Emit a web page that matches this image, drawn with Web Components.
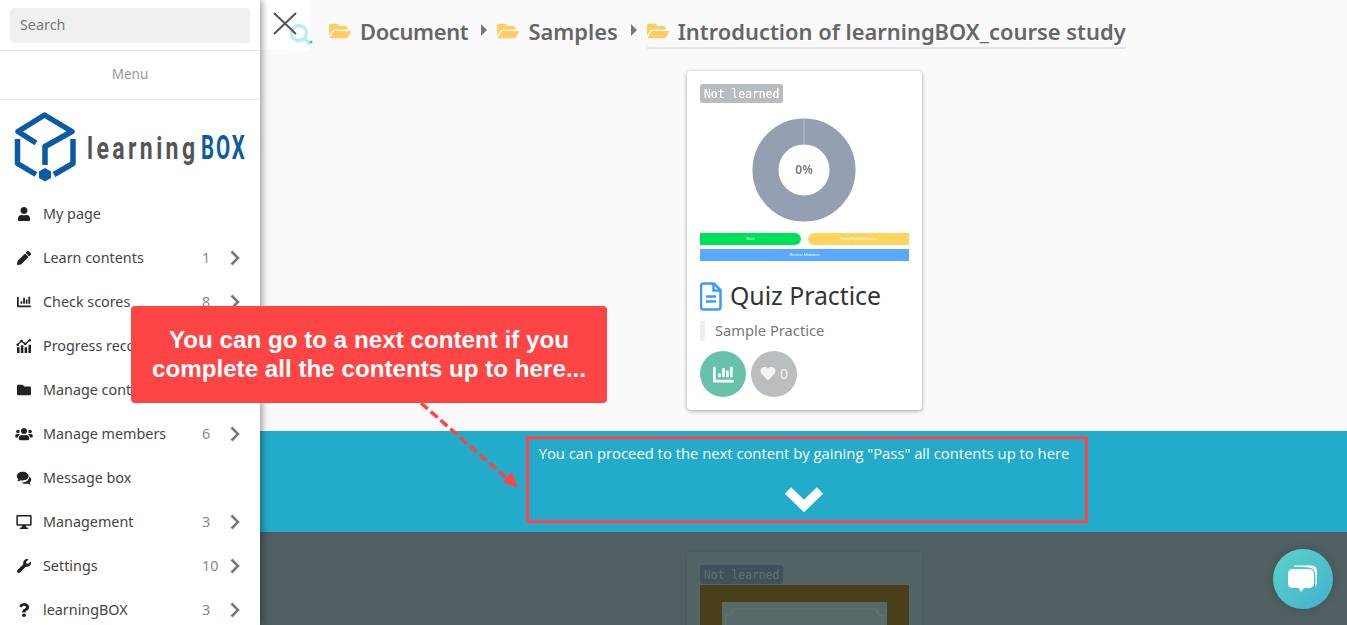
<!DOCTYPE html>
<html lang="en">
<head>
<meta charset="utf-8">
<title>learningBOX</title>
<style>
  html, body { margin: 0; padding: 0; height: 100%; overflow: hidden; }
  body { font-family: "Noto Sans", "Open Sans", sans-serif; }
</style>
</head>
<body>
<lb-page>
  <lb-sidebar slot="side">
    <lb-menu-item icon="user">My page</lb-menu-item>
    <lb-menu-item icon="pencil" count="1">Learn contents</lb-menu-item>
    <lb-menu-item icon="chart" count="8">Check scores</lb-menu-item>
    <lb-menu-item icon="progress">Progress records</lb-menu-item>
    <lb-menu-item icon="folder">Manage contents</lb-menu-item>
    <lb-menu-item icon="users" count="6">Manage members</lb-menu-item>
    <lb-menu-item icon="comments">Message box</lb-menu-item>
    <lb-menu-item icon="desktop" count="3">Management</lb-menu-item>
    <lb-menu-item icon="wrench" count="10">Settings</lb-menu-item>
    <lb-menu-item icon="question" count="3">learningBOX</lb-menu-item>
  </lb-sidebar>

  <lb-topbar>
    <lb-crumb style="letter-spacing: -.35px">Document</lb-crumb>
    <lb-crumb>Samples</lb-crumb>
    <lb-crumb current>Introduction of learningBOX_course study</lb-crumb>
  </lb-topbar>

  <lb-section>
    <lb-card status="Not learned">
      <lb-progress-thumb slot="thumb"></lb-progress-thumb>
      <span slot="title">Quiz Practice</span>
      <span slot="desc">Sample Practice</span>
    </lb-card>
  </lb-section>

  <lb-next-banner>You can proceed to the next content by gaining "Pass" all contents up to here</lb-next-banner>

  <lb-section dim>
    <lb-card status="Not learned" dim>
      <lb-certificate-thumb slot="thumb"></lb-certificate-thumb>
    </lb-card>
  </lb-section>

  <lb-callout slot="over">You can go to a next content if you<br>complete all the contents up to here...</lb-callout>
  <lb-chat-button slot="over"></lb-chat-button>
</lb-page>

<script>
const ICONS = {
  user: '<svg viewBox="0 0 448 512"><path d="M224 256c70.7 0 128-57.3 128-128S294.7 0 224 0 96 57.3 96 128s57.3 128 128 128zm89.6 32h-16.7c-22.2 10.2-46.9 16-72.9 16s-50.6-5.8-72.9-16h-16.7C60.2 288 0 348.2 0 422.4V464c0 26.5 21.5 48 48 48h352c26.5 0 48-21.5 48-48v-41.6c0-74.2-60.2-134.4-134.4-134.4z"/></svg>',
  pencil: '<svg viewBox="0 0 512 512"><path d="M497.9 142.1l-46.1 46.1c-4.7 4.7-12.3 4.7-17 0l-111-111c-4.7-4.7-4.7-12.3 0-17l46.1-46.1c18.7-18.7 49.1-18.7 67.9 0l60.1 60.1c18.8 18.7 18.8 49.1 0 67.9zM284.2 99.8L21.6 362.4.4 483.9c-2.9 16.4 11.4 30.6 27.8 27.8l121.5-21.3 262.6-262.6c4.7-4.7 4.7-12.3 0-17l-111-111c-4.8-4.7-12.4-4.7-17.1 0z"/></svg>',
  chart: '<svg viewBox="0 0 512 512"><path d="M332.8 320h38.4c6.4 0 12.8-6.4 12.8-12.8V172.8c0-6.4-6.4-12.8-12.8-12.8h-38.4c-6.4 0-12.8 6.4-12.8 12.8v134.4c0 6.4 6.4 12.8 12.8 12.8zm96 0h38.4c6.4 0 12.8-6.4 12.8-12.8V76.8c0-6.4-6.4-12.8-12.8-12.8h-38.4c-6.4 0-12.8 6.4-12.8 12.8v230.4c0 6.4 6.4 12.8 12.8 12.8zm-288 0h38.4c6.4 0 12.8-6.4 12.8-12.8v-70.4c0-6.4-6.4-12.8-12.8-12.8h-38.4c-6.4 0-12.8 6.4-12.8 12.8v70.4c0 6.4 6.4 12.8 12.8 12.8zm96 0h38.4c6.4 0 12.8-6.4 12.8-12.8V108.8c0-6.4-6.4-12.8-12.8-12.8h-38.4c-6.4 0-12.8 6.4-12.8 12.8v198.4c0 6.4 6.4 12.8 12.8 12.8zM496 384H64V80c0-8.84-7.16-16-16-16H16C7.16 64 0 71.16 0 80v336c0 17.67 14.33 32 32 32h464c8.84 0 16-7.16 16-16v-32c0-8.84-7.16-16-16-16z"/></svg>',
  progress: '<svg viewBox="0 0 24 22"><path d="M1 13h4v9H1zM7 10h4v12H7zM13 13h4v9h-4zM19 9h4v13h-4z"/><path d="M2 9l6-6 6 5 7-6.500" fill="none" stroke="currentColor" stroke-width="2"/><circle cx="2" cy="9" r="2"/><circle cx="8" cy="3" r="2"/><circle cx="14" cy="8" r="2"/><circle cx="21" cy="2" r="2"/></svg>',
  folder: '<svg viewBox="0 0 512 512"><path d="M464 128H272l-64-64H48C21.49 64 0 85.49 0 112v288c0 26.51 21.49 48 48 48h416c26.51 0 48-21.49 48-48V176c0-26.51-21.49-48-48-48z"/></svg>',
  users: '<svg viewBox="0 0 640 512"><path d="M96 224c35.3 0 64-28.7 64-64s-28.7-64-64-64-64 28.700-64 64 28.700 64 64 64zm448 0c35.300 0 64-28.700 64-64s-28.700-64-64-64-64 28.700-64 64 28.700 64 64 64zm32 32h-64c-17.600 0-33.500 7.100-45.100 18.600 40.300 22.100 68.900 62 75.100 109.400h66c17.700 0 32-14.300 32-32v-32c0-35.300-28.700-64-64-64zm-256 0c61.900 0 112-50.100 112-112S381.900 32 320 32 208 82.100 208 144s50.100 112 112 112zm76.800 32h-8.300c-20.800 10-43.900 16-68.500 16s-47.600-6-68.500-16h-8.300C179.600 288 128 339.600 128 403.200V432c0 26.500 21.500 48 48 48h288c26.500 0 48-21.500 48-48v-28.800c0-63.600-51.600-115.200-115.200-115.200zm-223.700-13.400C161.500 263.100 145.600 256 128 256H64c-35.300 0-64 28.700-64 64v32c0 17.700 14.300 32 32 32h65.900c6.300-47.400 34.900-87.300 75.200-109.400z"/></svg>',
  comments: '<svg viewBox="0 0 24 22"><path d="M10 1c5.200 0 9.300 3.100 9.300 7s-4.100 7-9.300 7c-1.200 0-2.300-.2-3.400-.5C5.300 15.500 3.500 16.300 1.300 16.300c1-1 1.700-2.200 1.900-3.500C1.700 11.500.7 9.900.7 8 .7 4.100 4.800 1 10 1z"/><path d="M21 9.300c1.500 1.200 2.300 2.700 2.300 4.300 0 1.700-.9 3.200-2.500 4.400.2 1.200.8 2.300 1.800 3.300-2.100 0-3.900-.8-5.200-1.800-1 .3-2.100.5-3.300.5-2.500 0-4.700-.8-6.200-2.100 6 .3 12.500-2.800 12.100-8.600z"/></svg>',
  desktop: '<svg viewBox="0 0 24 22"><path fill-rule="evenodd" d="M2 0h20a2 2 0 0 1 2 2v13a2 2 0 0 1-2 2h-7l.7 2.500h1.800a1.200 1.200 0 0 1 0 2.400h-11a1.200 1.200 0 0 1 0-2.400h1.800L9 17H2a2 2 0 0 1-2-2V2a2 2 0 0 1 2-2zm.4 2.400v12.200h19.200V2.400z"/></svg>',
  wrench: '<svg viewBox="0 0 512 512"><path d="M507.730 109.100c-2.240-9.030-13.540-12.090-20.120-5.510l-74.360 74.360-67.880-11.310-11.310-67.880 74.360-74.360c6.620-6.620 3.430-17.900-5.660-20.160-47.380-11.740-99.550.91-136.580 37.930-39.640 39.640-50.550 97.100-34.050 147.200L18.740 402.760c-24.990 24.990-24.990 65.510 0 90.500 24.990 24.990 65.510 24.990 90.500 0l213.210-213.210c50.120 16.710 107.470 5.680 147.370-34.220 37.070-37.070 49.700-89.320 37.910-136.730z"/></svg>',
  question: '<svg viewBox="0 0 384 512"><path d="M202 0C122 0 70 33 29 91c-7 11-5 25 5 33l43 33c11 8 25 6 34-4 25-32 44-50 84-50 31 0 70 20 70 51 0 23-19 35-50 52-36 21-84 46-84 109v10c0 13 11 24 24 24h72c13 0 24-11 24-24v-6c0-44 128-46 128-165C379 64 287 0 202 0zm-10 383c-39 0-71 32-71 65s32 64 71 64 71-29 71-64-32-65-71-65z"/></svg>',
  heart: '<svg viewBox="0 0 512 512"><path d="M462.300 62.600C407.500 15.900 326 24.300 275.700 76.200L256 96.500l-19.700-20.300C186.100 24.300 104.500 15.900 49.700 62.600c-62.800 53.600-66.100 149.800-9.900 207.900l193.500 199.800c12.500 12.900 32.800 12.900 45.300 0l193.500-199.800c56.300-58.100 53-154.300-9.800-207.900z"/></svg>',
  folderOpen: '<svg viewBox="0 0 576 512"><path d="M572.694 292.093L500.270 416.248A63.997 63.997 0 0 1 444.989 448H45.025c-18.523 0-30.064-20.093-20.731-36.093l72.424-124.155A64 64 0 0 1 152 256h399.964c18.523 0 30.064 20.093 20.730 36.093zM152 224h328v-48c0-26.510-21.490-48-48-48H272l-64-64H48C21.490 64 0 85.490 0 112v278.046l69.077-118.418C86.214 242.250 117.989 224 152 224z"/></svg>',
};

class LbIcon extends HTMLElement {
  constructor() {
    super();
    const shadowRoot = this.attachShadow({ mode: "open" });
    shadowRoot.innerHTML = `
      <style>
        :host { display: inline-flex; align-items: center; justify-content: center; }
        svg { width: 100%; height: 100%; fill: currentColor; display: block; }
      </style>
      ${ICONS[this.getAttribute("name")] || ""}
    `;
  }
}

class LbPage extends HTMLElement {
  constructor() {
    super();
    const shadowRoot = this.attachShadow({ mode: "open" });
    shadowRoot.innerHTML = `
      <style>
        :host { display: flex; position: relative; width: 100%; height: 625px; overflow: hidden; background: #fafafa; }
        .side { flex: 0 0 260px; position: relative; z-index: 2; }
        main { flex: 1; min-width: 0; display: flex; flex-direction: column; }
        svg.arrow { position: absolute; left: 0; top: 0; z-index: 3; pointer-events: none; }
      </style>
      <div class="side"><slot name="side"></slot></div>
      <main><slot></slot></main>
      <svg class="arrow" width="1347" height="625">
        <path d="M421 403L510 481" fill="none" stroke="#ff4545" stroke-width="3.500" stroke-dasharray="9 4"/>
        <path d="M518 488L503 482L512 472z" fill="#ff4545"/>
      </svg>
      <slot name="over"></slot>
    `;
  }
}

class LbSidebar extends HTMLElement {
  constructor() {
    super();
    const shadowRoot = this.attachShadow({ mode: "open" });
    shadowRoot.innerHTML = `
      <style>
        :host { display: block; height: 625px; overflow: hidden; background: #fff; box-shadow: 2px 0 7px rgba(0,0,0,.4); color: #444; }
        .search { padding: 8px 10px 7px; border-bottom: 1px solid #e5e5e5; }
        .search div { height: 35px; line-height: 34px; background: #f0f0f0; border-radius: 4px; padding-left: 10px; font-size: 14.350px; color: #777; }
        .title { height: 48px; line-height: 47px; text-align: center; font-size: 13.500px; color: #999; border-bottom: 1px solid #e5e5e5; }
        .logo { display: block; padding: 12px 0 0 15px; height: 80px; }
      </style>
      <div class="search"><div>Search</div></div>
      <div class="title">Menu</div>
      <div class="logo"><lb-logo></lb-logo></div>
      <slot></slot>
    `;
  }
}

class LbLogo extends HTMLElement {
  constructor() {
    super();
    const shadowRoot = this.attachShadow({ mode: "open" });
    shadowRoot.innerHTML = `
      <style>
        :host { display: block; }
        svg { display: block; overflow: visible; }
        text { font-family: Roboto, "Liberation Sans", sans-serif; font-weight: 700; }
      </style>
      <svg width="232" height="70" viewBox="15 112 232 70">
        <g fill="none" stroke="#0b5aa6" stroke-width="5.500" stroke-linejoin="round">
          <path d="M36 143L18 131.500L44.500 115L72 131.500L45 146.500V165"/>
          <path d="M17.500 139V163.500L36 174.500"/>
          <path d="M73 139V163.500L54 174.500"/>
        </g>
        <path d="M45 168l6 3.500v6.500l-6 3.500l-6-3.500v-6.500z" fill="#0b5aa6"/>
        <text transform="translate(87 159) scale(.72 1)" font-size="32" fill="#555" letter-spacing="4.700">learning</text>
        <text transform="translate(201 159) scale(.62 1)" font-size="33" fill="#0b5aa6" letter-spacing="3">BOX</text>
      </svg>
    `;
  }
}

class LbMenuItem extends HTMLElement {
  constructor() {
    super();
    const shadowRoot = this.attachShadow({ mode: "open" });
    const count = this.getAttribute("count");
    shadowRoot.innerHTML = `
      <style>
        :host { display: flex; align-items: center; height: 44px; padding-left: 15px; font-size: 14.350px; color: #444; }
        lb-icon { width: 18px; height: 14px; margin-right: 10px; color: #222; }
        .label { flex: 1; white-space: nowrap; overflow: hidden; margin-top: -2px; }
        .count { width: 29px; color: #888; margin-top: -2px; }
        .chev { width: 10px; height: 16px; margin-right: 20px; margin-left: -1px; }
        .chev path { fill: none; stroke: #777; stroke-width: 2.500; }
      </style>
      <lb-icon name="${this.getAttribute("icon")}"></lb-icon>
      <span class="label"><slot></slot></span>
      ${count ? `<span class="count">${count}</span>
      <svg class="chev" viewBox="0 0 10 16"><path d="M1.500 1.500L8 8L1.500 14.500"/></svg>` : ""}
    `;
  }
}

class LbTopbar extends HTMLElement {
  constructor() {
    super();
    const shadowRoot = this.attachShadow({ mode: "open" });
    shadowRoot.innerHTML = `
      <style>
        :host { display: flex; height: 50px; flex: 0 0 50px; }
        .close { flex: 0 0 50px; height: 50px; background: #fff; }
        .close svg { display: block; overflow: visible; }
        nav { display: flex; align-items: flex-start; padding: 13px 0 0 19px; }
      </style>
      <div class="close">
        <svg width="50" height="50">
          <circle cx="39" cy="33" r="7.500" fill="none" stroke="#b9ecf7" stroke-width="3.500"/>
          <path d="M44.500 38.500L50 44" stroke="#b9ecf7" stroke-width="3.500"/>
          <circle cx="51" cy="42" r="1.500" fill="#29c3ea"/>
          <path d="M14 13L36 34M36 13L14 34" stroke="#555" stroke-width="2"/>
        </svg>
      </div>
      <nav><slot></slot></nav>
    `;
  }
}

class LbCrumb extends HTMLElement {
  constructor() {
    super();
    const shadowRoot = this.attachShadow({ mode: "open" });
    const current = this.hasAttribute("current");
    shadowRoot.innerHTML = `
      <style>
        :host { display: flex; align-items: center; font-size: 21.900px; font-weight: 600; color: #666; white-space: nowrap; }
        .wrap { display: flex; align-items: center; box-sizing: border-box; height: 34px; padding-top: 2px; gap: 9px; }
        .current { border-bottom: 2px solid #e6e6e6; height: 36px; }
        lb-icon { width: 22px; height: 20px; color: #ffcc66; }
        .tri { width: 0; height: 0; margin: 0 10px 0 13px; border-left: 6px solid #777; border-top: 6px solid transparent; border-bottom: 6px solid transparent; }
      </style>
      <div class="wrap ${current ? "current" : ""}">
        <lb-icon name="folderOpen"></lb-icon>
        <span><slot></slot></span>
      </div>
      ${current ? "" : '<div class="tri"></div>'}
    `;
  }
}

class LbSection extends HTMLElement {
  constructor() {
    super();
    const shadowRoot = this.attachShadow({ mode: "open" });
    shadowRoot.innerHTML = `
      <style>
        :host { display: flex; justify-content: center; padding: 21px 0 21px 2px; height: 339px; flex: none; }
        :host([dim]) { background: #4f5f62; padding-top: 20px; }
      </style>
      <slot></slot>
    `;
  }
}

class LbCard extends HTMLElement {
  constructor() {
    super();
    const shadowRoot = this.attachShadow({ mode: "open" });
    const dim = this.hasAttribute("dim");
    shadowRoot.innerHTML = `
      <style>
        :host { display: block; box-sizing: border-box; width: 235px; height: 339px; padding: 13px; background: #fff; border-radius: 4px; box-shadow: 0 1px 4px rgba(0,0,0,.35); color: #333; }
        :host([dim]) { background: #536467; box-shadow: 0 0 3px rgba(0,0,0,.08); }
        .badge { display: block; width: max-content; height: 19px; line-height: 19px; padding: 0 4px; border-radius: 3px; background: #b7bcc0; color: #fff; font: normal 11.400px/20px "DejaVu Sans Mono", "Liberation Mono", monospace; text-shadow: 0 0 .6px currentColor; filter: blur(.3px); }
        :host([dim]) .badge { background: #3f525b; color: #5d6d71; }
        .title { display: flex; align-items: center; gap: 8px; height: 30px; margin-top: 20px; font-size: 24.800px; white-space: nowrap; }
        .title svg { flex: none; }
        .title span { padding-bottom: 2px; }
        .desc { display: flex; align-items: center; box-sizing: border-box; height: 20px; margin-top: 10px; border-left: 5px solid #eee; padding: 0 0 3px 10px; font-size: 14.700px; color: #777; }
        .actions { display: flex; gap: 5px; margin-top: 10px; }
        .round { box-sizing: border-box; width: 46px; height: 46px; border-radius: 50%; display: flex; align-items: center; justify-content: center; color: #fff; }
        .stats { background: #66c2ab; }
        .stats lb-icon { width: 23px; height: 21px; }
        .like { background: #babec1; gap: 4px; padding-bottom: 2px; font-size: 14px; color: #f3f3f3; }
        .like lb-icon { width: 16px; height: 15px; }
      </style>
      <span class="badge">${this.getAttribute("status") || ""}</span>
      <slot name="thumb"></slot>
      ${dim ? "" : `
      <div class="title">
        <svg width="22" height="29" viewBox="0 0 22 29"><path d="M3.500 1.500H14L20.500 8V25a2.500 2.500 0 0 1-2.500 2.500H3.500A2.500 2.500 0 0 1 1 25V4a2.500 2.500 0 0 1 2.500-2.500z" fill="none" stroke="#3d9bff" stroke-width="2.500"/><path d="M13.500 2V8.500H20M6 14.500H16M6 19.500H16" fill="none" stroke="#3d9bff" stroke-width="2.500"/></svg>
        <span><slot name="title"></slot></span>
      </div>
      <div class="desc"><slot name="desc"></slot></div>
      <div class="actions">
        <div class="round stats"><lb-icon name="chart"></lb-icon></div>
        <div class="round like"><lb-icon name="heart"></lb-icon>0</div>
      </div>`}
    `;
  }
}

class LbProgressThumb extends HTMLElement {
  constructor() {
    super();
    const shadowRoot = this.attachShadow({ mode: "open" });
    shadowRoot.innerHTML = `
      <style>
        :host { display: block; height: 143px; padding-top: 15px; box-sizing: content-box; filter: blur(.4px); }
        .donut { position: relative; width: 104px; height: 104px; margin: 0 0 11px 52px; }
        .donut svg { display: block; }
        .pct { position: absolute; inset: -2px 0 0; display: flex; align-items: center; justify-content: center; font: 600 12px "Noto Sans", sans-serif; color: #777; }
        .row { display: flex; gap: 7px; font: 4px/12px "Liberation Sans", sans-serif; color: #fff; text-align: center; }
        .row div { flex: 1; height: 12px; }
        .green { background: #00e05a; border-radius: 0 6px 6px 0; }
        .yellow { background: #ffd45e; border-radius: 6px 0 0 6px; }
        .blue { margin-top: 4px; height: 12px; background: #5aa9ff; color: #fff; font: 4px/12px "Liberation Sans", sans-serif; text-align: center; }
      </style>
      <div class="donut">
        <svg width="104" height="104">
          <circle cx="52" cy="52" r="38.500" fill="none" stroke="#949fb2" stroke-width="26"/>
          <path d="M52 1V27" stroke="#bcc3cf" stroke-width="1"/>
        </svg>
        <div class="pct">0%</div>
      </div>
      <div class="row"><div class="green">Start</div><div class="yellow">Retry Failed Quizzes</div></div>
      <div class="blue">Review Mistakes</div>
    `;
  }
}

class LbCertificateThumb extends HTMLElement {
  constructor() {
    super();
    const shadowRoot = this.attachShadow({ mode: "open" });
    shadowRoot.innerHTML = `
      <style>
        :host { display: block; margin-top: 1px; height: 60px; background: #4a3f1b; padding: 17px 22px 0; box-sizing: border-box; }
        svg { display: block; }
      </style>
      <svg width="165" height="43" viewBox="0 0 165 43">
        <rect width="165" height="43" fill="#566a6c"/>
        <path d="M4 43V14Q10 14 10 8Q10 7 14 7H151Q155 7 155 8Q155 14 161 14V43" fill="none" stroke="#66745c" stroke-width="1.500"/>
      </svg>
    `;
  }
}

class LbNextBanner extends HTMLElement {
  constructor() {
    super();
    const shadowRoot = this.attachShadow({ mode: "open" });
    shadowRoot.innerHTML = `
      <style>
        :host { display: flex; justify-content: center; flex: none; height: 101px; box-sizing: border-box; padding: 5px 0 0 6px; background: #22abca; color: #fff; }
        .box { box-sizing: border-box; width: 562px; height: 87px; padding-right: 5px; border: 3px solid #ff4545; display: flex; flex-direction: column; align-items: center; }
        .text { margin-top: 4px; font: 14.800px/20px "Open Sans", sans-serif; white-space: nowrap; }
        svg { display: block; margin-top: 21px; flex: none; }
      </style>
      <div class="box">
        <div class="text"><slot></slot></div>
        <svg width="40" height="29" viewBox="0 0 40 29"><path d="M4 6.500L20 22L36 6.500" fill="none" stroke="#fff" stroke-width="9" stroke-linejoin="miter"/></svg>
      </div>
    `;
  }
}

class LbCallout extends HTMLElement {
  constructor() {
    super();
    const shadowRoot = this.attachShadow({ mode: "open" });
    shadowRoot.innerHTML = `
      <style>
        :host { position: absolute; left: 131px; top: 306px; width: 476px; height: 97px; z-index: 4; box-sizing: border-box; padding-top: 19px; background: #fe4545; border-radius: 4px; color: #fff; text-align: center; font: bold 24.200px/29px "Liberation Sans", Arial, sans-serif; }
      </style>
      <slot></slot>
    `;
  }
}

class LbChatButton extends HTMLElement {
  constructor() {
    super();
    const shadowRoot = this.attachShadow({ mode: "open" });
    shadowRoot.innerHTML = `
      <style>
        :host { position: absolute; right: 14px; bottom: 16px; width: 60px; height: 60px; z-index: 4; border-radius: 50%; background: linear-gradient(135deg, #5ad3c6, #44b0d2); box-shadow: 0 0 8px rgba(0,0,0,.15); display: flex; align-items: center; justify-content: center; }
      </style>
      <svg width="32" height="30" viewBox="0 0 32 30">
        <path d="M7 1.500H24Q30 1.500 30 7.500V18Q30 21 28 22.500Q29 16 28 9Q27 4 22 3.500Q14 2.500 7 3z" fill="#fff"/>
        <path d="M6 5H21Q27 5 27 10V19Q27 24 21 24H17L14 28L11.500 24H6Q1 24 1 19V10Q1 5 6 5z" fill="#fff"/>
      </svg>
    `;
  }
}

customElements.define("lb-icon", LbIcon);
customElements.define("lb-page", LbPage);
customElements.define("lb-sidebar", LbSidebar);
customElements.define("lb-logo", LbLogo);
customElements.define("lb-menu-item", LbMenuItem);
customElements.define("lb-topbar", LbTopbar);
customElements.define("lb-crumb", LbCrumb);
customElements.define("lb-section", LbSection);
customElements.define("lb-card", LbCard);
customElements.define("lb-progress-thumb", LbProgressThumb);
customElements.define("lb-certificate-thumb", LbCertificateThumb);
customElements.define("lb-next-banner", LbNextBanner);
customElements.define("lb-callout", LbCallout);
customElements.define("lb-chat-button", LbChatButton);
</script>
</body>
</html>
